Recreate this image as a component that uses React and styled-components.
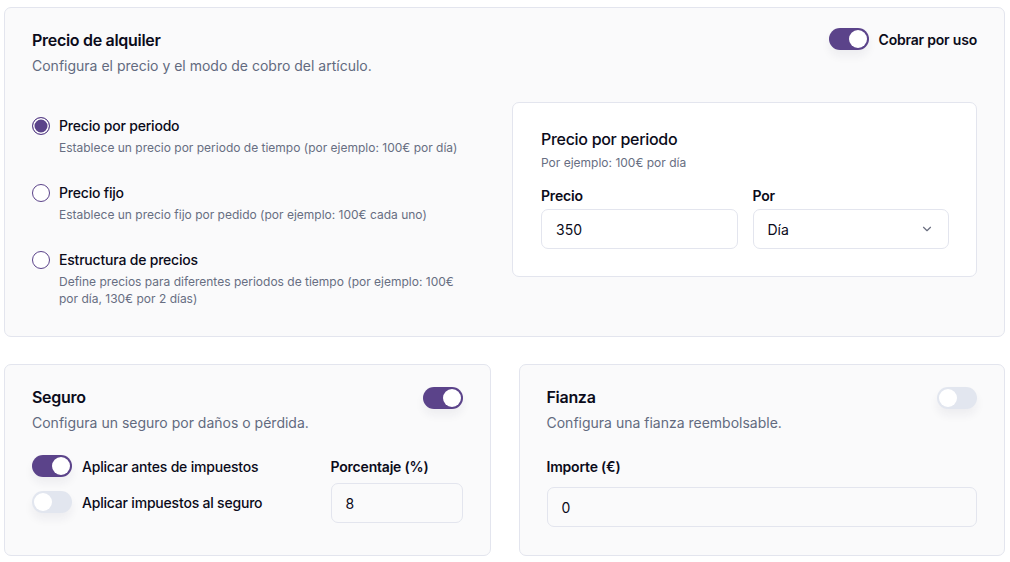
import styled, { createGlobalStyle } from "styled-components"

const GlobalStyle = createGlobalStyle`
  * { box-sizing: border-box; }
  body {
    margin: 0;
    background: #fff;
    font-family: "Inter", "Noto Sans", sans-serif;
    color: #0b0b1a;
  }
`

const Page = styled.div`
  display: flex;
  flex-direction: column;
  gap: 27px;
  padding: 7px 5px 8px 4px;
`

const Card = styled.section`
  background: #fafafb;
  border: 1px solid #e3e5ee;
  border-radius: 7px;
  padding: ${({ $pad }) => $pad || "24px 27px 28px"};
`

const Row = styled.div`
  display: grid;
  grid-template-columns: 1fr 1fr;
  gap: 28px;
`

const Header = styled.div`
  display: flex;
  justify-content: space-between;
  align-items: flex-start;
`

const Title = styled.h2`
  margin: 0;
  font-size: 16px;
  font-weight: 600;
  line-height: 20px;
  letter-spacing: -0.3px;
`

const Subtitle = styled.p`
  margin: 7px 0 0;
  font-size: 14px;
  line-height: 18px;
  color: #626a7f;
`

const SwitchLabel = styled.label`
  display: flex;
  align-items: center;
  gap: 10px;
  margin-top: ${({ $mt }) => $mt || "0"};
  font-size: 14px;
  font-weight: 600;
  letter-spacing: -0.2px;
`

const Track = styled.span`
  position: relative;
  display: inline-block;
  flex: none;
  width: 40px;
  height: 22px;
  border-radius: 11px;
  background: ${({ $on }) => ($on ? "#5b438a" : "#e2e6ef")};
  box-shadow: 0 6px 10px rgba(30, 30, 60, 0.06);
`

const Knob = styled.span`
  position: absolute;
  top: 2px;
  left: ${({ $on }) => ($on ? "20px" : "2px")};
  width: 18px;
  height: 18px;
  border-radius: 50%;
  background: #fff;
`

function Switch({ on }) {
  return (
    <Track $on={on}>
      <Knob $on={on} />
    </Track>
  )
}

const PricingBody = styled.div`
  display: grid;
  grid-template-columns: 1fr 465px;
  gap: 21px;
  margin-top: 27px;
`

const Options = styled.div`
  display: flex;
  flex-direction: column;
  gap: 28px;
  padding-top: 15px;
`

const Option = styled.div`
  display: grid;
  grid-template-columns: 18px 1fr;
  column-gap: 9px;
`

const Radio = styled.span`
  width: 18px;
  height: 18px;
  border-radius: 50%;
  border: 1.5px solid #5b438a;
  background: ${({ $on }) => ($on ? "#5b438a" : "#fff")};
  box-shadow: ${({ $on }) => ($on ? "inset 0 0 0 1.5px #fff" : "none")};
`

const OptionName = styled.div`
  font-size: 14px;
  font-weight: 500;
  line-height: 18px;
  letter-spacing: -0.2px;
`

const OptionHint = styled.div`
  grid-column: 2;
  margin-top: 4px;
  font-size: 12px;
  line-height: 17px;
  color: #676e82;
  max-width: 412px;
`

const InnerCard = styled.div`
  background: #fff;
  border: 1px solid #e3e5ee;
  border-radius: 7px;
  padding: 26px 27px 27px 28px;
  align-self: start;
`

const InnerTitle = styled.h3`
  margin: 0;
  font-size: 16px;
  font-weight: 500;
  line-height: 20px;
  letter-spacing: -0.3px;
`

const Hint = styled.p`
  margin: 6px 0 0;
  font-size: 12px;
  color: #676e82;
`

const Fields = styled.div`
  display: grid;
  grid-template-columns: ${({ $cols }) => $cols || "1fr"};
  gap: 15px;
  margin-top: ${({ $mt }) => $mt || "17px"};
`

const Field = styled.div`
  display: flex;
  flex-direction: column;
  gap: ${({ $gap }) => $gap || "4px"};
  padding-top: ${({ $pt }) => $pt || "0"};
`

const FieldLabel = styled.span`
  font-size: 14px;
  font-weight: 600;
  line-height: 18px;
  letter-spacing: -0.2px;
`

const Input = styled.div`
  display: flex;
  align-items: center;
  justify-content: space-between;
  height: 40px;
  padding: 0 14px;
  border: 1px solid #e3e5ee;
  border-radius: 7px;
  background: ${({ $bg }) => $bg || "transparent"};
  font-size: 14px;
`

const Chevron = () => (
  <svg width="14" height="14" viewBox="0 0 24 24" fill="none" stroke="#6b6f80" strokeWidth="2" strokeLinecap="round" strokeLinejoin="round">
    <path d="m6 9 6 6 6-6" />
  </svg>
)

const SeguroBody = styled.div`
  display: grid;
  grid-template-columns: 1fr 132px;
  gap: 20px;
  margin-top: 22px;
`

const SwitchList = styled.div`
  display: flex;
  flex-direction: column;
  gap: 14px;
  padding-top: 1px;
`

const SwitchText = styled.span`
  font-weight: 500;
`

export default function App() {
  return (
    <>
      <GlobalStyle />
      <Page>
        <Card $pad="22px 27px 29px">
          <Header>
            <div>
              <Title>Precio de alquiler</Title>
              <Subtitle>Configura el precio y el modo de cobro del artículo.</Subtitle>
            </div>
            <SwitchLabel $mt="-2px">
              <Switch on />
              Cobrar por uso
            </SwitchLabel>
          </Header>
          <PricingBody>
            <Options>
              <Option>
                <Radio $on />
                <OptionName>Precio por periodo</OptionName>
                <OptionHint>Establece un precio por periodo de tiempo (por ejemplo: 100€ por día)</OptionHint>
              </Option>
              <Option>
                <Radio />
                <OptionName>Precio fijo</OptionName>
                <OptionHint>Establece un precio fijo por pedido (por ejemplo: 100€ cada uno)</OptionHint>
              </Option>
              <Option>
                <Radio />
                <OptionName>Estructura de precios</OptionName>
                <OptionHint>
                  Define precios para diferentes periodos de tiempo (por ejemplo: 100€ por día, 130€ por 2 días)
                </OptionHint>
              </Option>
            </Options>
            <InnerCard>
              <InnerTitle>Precio por periodo</InnerTitle>
              <Hint>Por ejemplo: 100€ por día</Hint>
              <Fields $cols="1fr 1fr">
                <Field>
                  <FieldLabel>Precio</FieldLabel>
                  <Input $bg="#fff">350</Input>
                </Field>
                <Field>
                  <FieldLabel>Por</FieldLabel>
                  <Input $bg="#fff">
                    Día
                    <Chevron />
                  </Input>
                </Field>
              </Fields>
            </InnerCard>
          </PricingBody>
        </Card>

        <Row>
          <Card $pad="22px 27px 32px">
            <Header>
              <div>
                <Title>Seguro</Title>
                <Subtitle>Configura un seguro por daños o pérdida.</Subtitle>
              </div>
              <Switch on />
            </Header>
            <SeguroBody>
              <SwitchList>
                <SwitchLabel>
                  <Switch on />
                  <SwitchText>Aplicar antes de impuestos</SwitchText>
                </SwitchLabel>
                <SwitchLabel>
                  <Switch />
                  <SwitchText>Aplicar impuestos al seguro</SwitchText>
                </SwitchLabel>
              </SwitchList>
              <Field $gap="7px" $pt="4px">
                <FieldLabel>Porcentaje (%)</FieldLabel>
                <Input>8</Input>
              </Field>
            </SeguroBody>
          </Card>
          <Card $pad="22px 27px 27px">
            <Header>
              <div>
                <Title>Fianza</Title>
                <Subtitle>Configura una fianza reembolsable.</Subtitle>
              </div>
              <Switch />
            </Header>
            <Fields $mt="26px">
              <Field $gap="11px">
                <FieldLabel>Importe (€)</FieldLabel>
                <Input>0</Input>
              </Field>
            </Fields>
          </Card>
        </Row>
      </Page>
    </>
  )
}
